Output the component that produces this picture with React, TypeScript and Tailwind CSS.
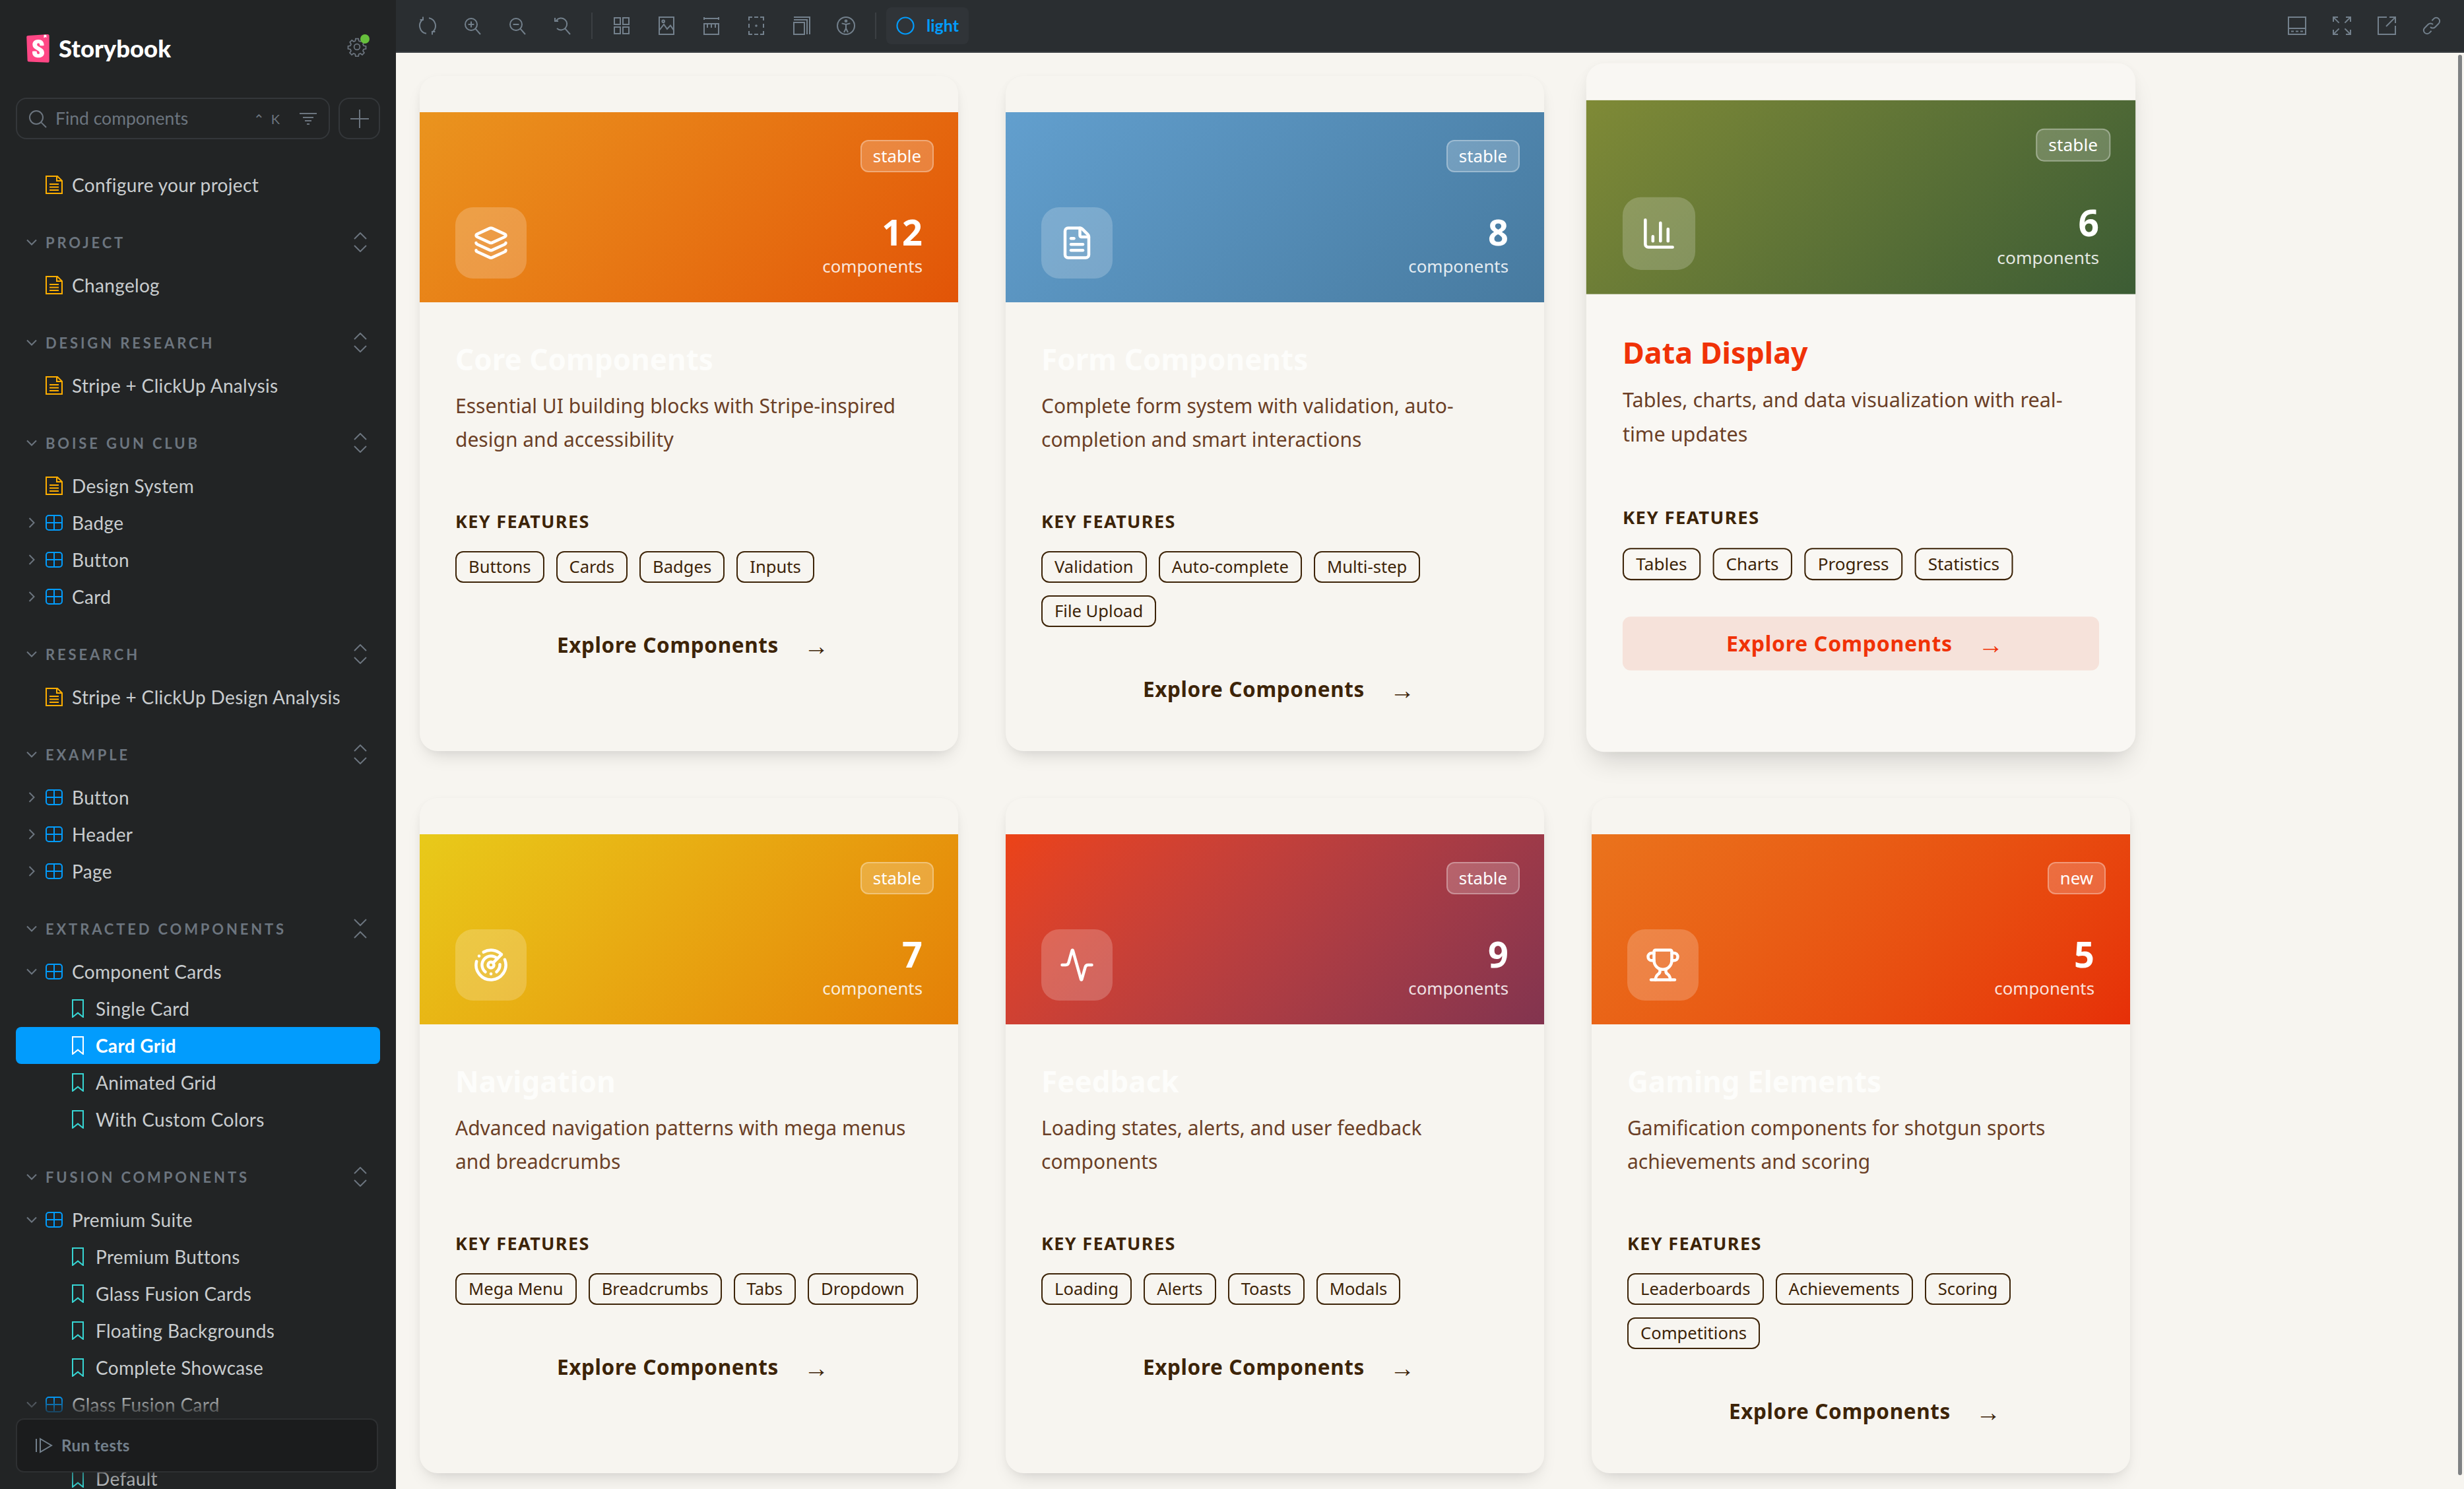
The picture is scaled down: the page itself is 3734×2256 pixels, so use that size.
import type { ReactNode } from 'react';
import { Layers, FileText, ChartColumn, Radar, Activity, Trophy } from 'lucide-react';

const sbFont = "font-['Lato','Noto_Sans',sans-serif]";

function Ico({ children, size = 28, className = '' }: { children: ReactNode; size?: number; className?: string }) {
  return (
    <svg width={size} height={size} viewBox="0 0 14 14" fill="none" stroke="currentColor" strokeWidth="1" className={className}>
      {children}
    </svg>
  );
}

const toolIcons: ReactNode[] = [
  <><path d="M6 12.900A6 6 0 0 1 3.300 2.300" /><path d="M8 1.100A6 6 0 0 1 10.700 11.700" /><path d="M3.500.3v2.200H1.300M10.500 13.700v-2.200h2.200" /></>,
  <><circle cx="6" cy="6" r="4.500" /><path d="M9.300 9.300L13 13.500M6 3.800v4.400M3.800 6h4.400" /></>,
  <><circle cx="6" cy="6" r="4.500" /><path d="M9.300 9.300L13 13.500M3.800 6h4.400" /></>,
  <><path d="M2.500 3a4.500 4.500 0 1 1 .5 6" /><path d="M9.300 9.300L13 13.500M1.500 1v2.500H4" /></>,
  <><path d="M1.500 1h4.500v5H1.500zM8 1h4.500v5H8zM1.500 8h4.500v5H1.500zM8 8h4.500v5H8z" /></>,
  <><path d="M1.500.5h11v13h-11z" /><circle cx="4.600" cy="3.600" r=".9" /><path d="M1.500 10.500L5 6l2.500 3.500L10 6.800l2.500 3.500" /></>,
  <><path d="M1.500.5v2M12.500.5v2M1.500 1.500h11M1.500 5.500h11v8h-11zM4 5.500v3M7 5.500v3M10 5.500v3" /></>,
  <><path d="M1.500 3V.5H4M10 .5h2.500V3M12.500 5.500v3M12.500 11v2.500H10M4 13.500H1.500V11M1.500 8.500v-3M5.500.5h3M5.500 13.500h3" /><circle cx="7" cy="7" r=".4" /></>,
  <><path d="M1.500 4.500h8v9h-8zM1.500 2.500h10v11M1.500.5h12v13" /></>,
  <><circle cx="7" cy="7" r="6.500" /><circle cx="7" cy="3.400" r=".7" /><path d="M3.800 5.200L7 6l3.200-.8M7 6v3M7 9l-1.500 3M7 9l1.500 3" /></>,
];

const rightIcons: ReactNode[] = [
  <><path d="M.5.5h13v13H.5zM.5 9h13M2.500 11.300h2M6 11.300h2M9.500 11.300h2" /></>,
  <><path d="M.8.8l4 4M13.200.8l-4 4M.8 13.200l4-4M13.200 13.200l-4-4M.5 4V.5H4M10 .5h3.500V4M.5 10v3.500H4M10 13.500h3.500V10" /></>,
  <><path d="M7 .5H.5v13h13V7M6.500 7.500L13.200.8M9 .5h4.500V5" /></>,
  <><path d="M6 8a2.600 2.600 0 0 0 3.700 0l2.600-2.600a2.600 2.600 0 0 0-3.700-3.700L7.200 3.100" /><path d="M8 6a2.600 2.600 0 0 0-3.700 0L1.700 8.600a2.600 2.600 0 0 0 3.700 3.700l1.400-1.400" /></>,
];

function Toolbar() {
  return (
    <div className="h-20 shrink-0 bg-[#2a2e31] border-b-2 border-[#3b3f43] flex items-center pl-[14px] pr-[15px] text-[#73808c]">
      {toolIcons.slice(0, 4).map((icon, i) => (
        <div key={i} className="w-[68px] h-12 flex items-center justify-center">
          <Ico>{icon}</Ico>
        </div>
      ))}
      <div className="w-[2px] h-10 bg-[#3b3f43] mx-[10px]" />
      {toolIcons.slice(4).map((icon, i) => (
        <div key={i} className="w-[68px] h-12 flex items-center justify-center">
          <Ico>{icon}</Ico>
        </div>
      ))}
      <div className="w-[2px] h-10 bg-[#3b3f43] mx-[10px]" />
      <div className="w-[125px] h-14 ml-[5px] rounded-lg bg-[#303438] flex items-center pl-[15px] gap-[18px] text-[#029cfd]">
        <svg width="28" height="28" viewBox="0 0 28 28" fill="none" stroke="currentColor" strokeWidth="2.200"><circle cx="14" cy="14" r="12.500" /></svg>
        <span className={`${sbFont} text-[25px] font-bold`}>light</span>
      </div>
      <div className="ml-auto flex">
        {rightIcons.map((icon, i) => (
          <div key={i} className="w-[68px] h-12 flex items-center justify-center">
            <Ico>{icon}</Ico>
          </div>
        ))}
      </div>
    </div>
  );
}

type NavItem = { label: string; kind: 'doc' | 'comp' | 'compClosed' | 'story'; selected?: boolean; pushed?: boolean };
type NavGroup = { title?: string; collapse?: boolean; items: NavItem[] };

const nav: NavGroup[] = [
  { items: [{ label: 'Configure your project', kind: 'doc' }] },
  { title: 'PROJECT', items: [{ label: 'Changelog', kind: 'doc' }] },
  { title: 'DESIGN RESEARCH', items: [{ label: 'Stripe + ClickUp Analysis', kind: 'doc' }] },
  {
    title: 'BOISE GUN CLUB',
    items: [
      { label: 'Design System', kind: 'doc' },
      { label: 'Badge', kind: 'compClosed' },
      { label: 'Button', kind: 'compClosed' },
      { label: 'Card', kind: 'compClosed' },
    ],
  },
  { title: 'RESEARCH', items: [{ label: 'Stripe + ClickUp Design Analysis', kind: 'doc' }] },
  {
    title: 'EXAMPLE',
    items: [
      { label: 'Button', kind: 'compClosed' },
      { label: 'Header', kind: 'compClosed' },
      { label: 'Page', kind: 'compClosed' },
    ],
  },
  {
    title: 'EXTRACTED COMPONENTS',
    collapse: true,
    items: [
      { label: 'Component Cards', kind: 'comp' },
      { label: 'Single Card', kind: 'story' },
      { label: 'Card Grid', kind: 'story', selected: true },
      { label: 'Animated Grid', kind: 'story' },
      { label: 'With Custom Colors', kind: 'story' },
    ],
  },
  {
    title: 'FUSION COMPONENTS',
    items: [
      { label: 'Premium Suite', kind: 'comp' },
      { label: 'Premium Buttons', kind: 'story' },
      { label: 'Glass Fusion Cards', kind: 'story' },
      { label: 'Floating Backgrounds', kind: 'story' },
      { label: 'Complete Showcase', kind: 'story' },
      { label: 'Glass Fusion Card', kind: 'comp' },
      { label: 'Default', kind: 'story', pushed: true },
    ],
  },
];

function Chevron({ closed }: { closed?: boolean }) {
  return (
    <svg width="16" height="10" viewBox="0 0 16 10" fill="none" stroke="#6c757f" strokeWidth="2" className={closed ? '-rotate-90' : ''}>
      <path d="M1 1.500l7 7 7-7" />
    </svg>
  );
}

function Row({ item }: { item: NavItem }) {
  const isStory = item.kind === 'story';
  return (
    <div className={`h-14 mx-6 rounded-lg flex items-center text-[28px] tracking-[0.012em] ${item.pushed ? 'mt-14' : ''} ${item.selected ? 'bg-[#029cfd] text-white font-bold' : 'text-[#c9cdcf]'}`}>
      <div className="w-[46px] pl-4 flex items-center">
        {(item.kind === 'comp' || item.kind === 'compClosed') && <Chevron closed={item.kind === 'compClosed'} />}
      </div>
      {isStory ? (
        <div className={`ml-[34px] w-[41px] ${item.selected ? 'text-white' : 'text-[#37d5d3]'}`}>
          <Ico><path d="M3 .5h8v13L7 10.300 3 13.500z" /></Ico>
        </div>
      ) : item.kind === 'doc' ? (
        <div className="-ml-[2px] w-[41px] text-[#ffae00]">
          <Ico><path d="M1 .5h8.500L13 4v9.500H1zM9 .5V4h4M3.500 6.500h7M3.500 8.800h7M3.500 11h7" /></Ico>
        </div>
      ) : (
        <div className="-ml-[2px] w-[41px] text-[#029cfd]">
          <Ico><rect x="1" y="1.500" width="12" height="11" rx="2" /><path d="M7 1.500v11M1 7h12" /></Ico>
        </div>
      )}
      <span className="whitespace-nowrap">{item.label}</span>
    </div>
  );
}

function Sidebar() {
  return (
    <aside className={`${sbFont} relative w-[600px] shrink-0 h-full bg-[#222425] overflow-hidden`}>
      <div className="h-[148px] pl-10 pr-[44px] pt-[52px] flex items-start justify-between">
        <div className="flex items-center gap-[14px]">
          <svg width="35" height="43" viewBox="0 0 16.100 20.100">
            <path d="M.62 18.430L0 1.920C-.02 1.370.4.910.95.880L14.990 0c.56-.03 1.030.4 1.070.950v18.100c0 .55-.46 1-1.010.98L1.570 19.390c-.52-.02-.93-.44-.95-.96z" fill="#FF4785" />
            <path d="M12.200 2.500l.1-2.100 1.700-.1.1 2.200-.8-.6-.7.5z" fill="#fff" />
            <path d="M9.370 7.860c0 .39 2.620.2 2.970-.07 0-2.660-1.430-4.060-4.040-4.060-2.620 0-4.080 1.420-4.080 3.550 0 3.710 5 3.780 5 5.800 0 .57-.28.91-.9.91-.8 0-1.120-.41-1.080-1.800 0-.3-3.050-.4-3.150 0-.23 3.370 1.860 4.340 4.260 4.340 2.320 0 4.140-1.240 4.140-3.480 0-3.990-5.080-3.880-5.080-5.850 0-.8.6-.91.95-.91.37 0 1.040.07 1 1.570z" fill="#fff" />
          </svg>
          <span className="text-white text-[36.500px] font-black leading-none">Storybook</span>
        </div>
        <div className="relative mt-1 text-[#6c757f]">
          <svg width="30" height="30" viewBox="0 0 24 24" fill="none" stroke="currentColor" strokeWidth="1.400">
            <circle cx="12" cy="12" r="3.500" />
            <path d="M10.300 2h3.400l.5 2.800 1.900.8 2.300-1.600 2.400 2.400-1.600 2.300.8 1.900 2.800.5v3.400l-2.800.5-.8 1.900 1.600 2.300-2.400 2.400-2.300-1.600-1.900.8-.5 2.800h-3.400l-.5-2.800-1.900-.8-2.300 1.600-2.400-2.400 1.600-2.300-.8-1.900-2.800-.5v-3.400l2.800-.5.8-1.900L3.400 6.400l2.400-2.400 2.300 1.600 1.900-.8z" />
          </svg>
          <div className="absolute -top-[4px] -right-[4px] w-[14px] h-[14px] rounded-full bg-[#66bf3c]" />
        </div>
      </div>

      <div className="mx-6 flex gap-[13px]">
        <div className="h-[63px] flex-1 rounded-2xl border-2 border-[#34373a] flex items-center pl-[17px] pr-[18px] text-[#6c757f]">
          <svg width="28" height="28" viewBox="0 0 14 14" fill="none" stroke="currentColor" strokeWidth="1"><circle cx="6" cy="6" r="5" /><path d="M9.800 9.800L13.500 13.500" /></svg>
          <span className="ml-[13px] text-[26.500px]">Find components</span>
          <span className="ml-auto text-[20px] mr-[30px]">⌃&nbsp;&nbsp;K</span>
          <svg width="26" height="20" viewBox="0 0 26 20" fill="none" stroke="currentColor" strokeWidth="2"><path d="M0 2h26M5 8h16M8 13h10M11 18h4" /></svg>
        </div>
        <div className="h-[63px] w-[63px] rounded-2xl border-2 border-[#34373a] flex items-center justify-center text-[#6c757f]">
          <svg width="28" height="28" viewBox="0 0 28 28" fill="none" stroke="currentColor" strokeWidth="2"><path d="M14 0v28M0 14h28" /></svg>
        </div>
      </div>

      <div className="pt-[41px]">
        {nav.map((group, i) => (
          <div key={i}>
            {group.title && (
              <div className="mt-[39px] mb-[17px] h-10 pl-10 pr-[44px] flex items-center text-[22px] font-bold tracking-[0.175em] text-[#6c757f]">
                <Chevron />
                <span className="ml-[13px]">{group.title}</span>
                <svg width="20" height="30" viewBox="0 0 20 30" fill="none" stroke="currentColor" strokeWidth="2" className="ml-auto mr-0">
                  {group.collapse ? <path d="M1 1l9 9 9-9M1 29l9-9 9 9" /> : <path d="M1 10l9-9 9 9M1 20l9 9 9-9" />}
                </svg>
              </div>
            )}
            {group.items.map((item, j) => (
              <Row key={j} item={item} />
            ))}
          </div>
        ))}
      </div>

      <div className="absolute left-0 right-0 bottom-0 h-[141px] bg-[linear-gradient(to_bottom,transparent_0%,#222425_24%,#222425_60%,transparent_100%)] pointer-events-none" />
      <div className="absolute left-6 right-[27px] bottom-[25px] h-[82px] rounded-xl bg-[#1b1c1d] border-2 border-[#2e3032] flex items-center pl-[28px] gap-[13px] text-[#73808c]">
        <svg width="26" height="24" viewBox="0 0 26 24" fill="none" stroke="currentColor" strokeWidth="2"><path d="M1 2v20M7 2l17 10L7 22z" /></svg>
        <span className="text-[24px] font-bold tracking-[0.02em]">Run tests</span>
      </div>
    </aside>
  );
}

type Card = {
  title: string;
  desc: string;
  count: number;
  badge: string;
  from: string;
  to: string;
  tags: string[];
  icon: ReactNode;
  hover?: boolean;
};

const iconProps = { size: 54, strokeWidth: 2, className: 'text-white' };

const cards: Card[] = [
  { title: 'Core Components', desc: 'Essential UI building blocks with Stripe-inspired design and accessibility', count: 12, badge: 'stable', from: 'from-[#ea941e]', to: 'to-[#e25407]', tags: ['Buttons', 'Cards', 'Badges', 'Inputs'], icon: <Layers {...iconProps} /> },
  { title: 'Form Components', desc: 'Complete form system with validation, auto-completion and smart interactions', count: 8, badge: 'stable', from: 'from-[#629fce]', to: 'to-[#477a9f]', tags: ['Validation', 'Auto-complete', 'Multi-step', 'File Upload'], icon: <FileText {...iconProps} /> },
  { title: 'Data Display', desc: 'Tables, charts, and data visualization with real-time updates', count: 6, badge: 'stable', from: 'from-[#7f8a36]', to: 'to-[#3c5c34]', tags: ['Tables', 'Charts', 'Progress', 'Statistics'], icon: <ChartColumn {...iconProps} />, hover: true },
  { title: 'Navigation', desc: 'Advanced navigation patterns with mega menus and breadcrumbs', count: 7, badge: 'stable', from: 'from-[#e8ca1a]', to: 'to-[#e47f07]', tags: ['Mega Menu', 'Breadcrumbs', 'Tabs', 'Dropdown'], icon: <Radar {...iconProps} /> },
  { title: 'Feedback', desc: 'Loading states, alerts, and user feedback components', count: 9, badge: 'stable', from: 'from-[#ec4316]', to: 'to-[#82344f]', tags: ['Loading', 'Alerts', 'Toasts', 'Modals'], icon: <Activity {...iconProps} /> },
  { title: 'Gaming Elements', desc: 'Gamification components for shotgun sports achievements and scoring', count: 5, badge: 'new', from: 'from-[#ea731c]', to: 'to-[#e62f08]', tags: ['Leaderboards', 'Achievements', 'Scoring', 'Competitions'], icon: <Trophy {...iconProps} /> },
];

function FeatureCard({ card }: { card: Card }) {
  return (
    <div className={`rounded-[27px] pt-[55px] ${card.hover ? 'bg-[#f9f7f3] scale-[1.02] -translate-y-[9px] shadow-[0_2px_14px_rgba(0,0,0,0.03),0_22px_40px_-12px_rgba(0,0,0,0.16)]' : 'bg-[#f7f5f0] shadow-[0_2px_12px_rgba(0,0,0,0.03),0_14px_28px_-10px_rgba(0,0,0,0.15)]'}`}>
      <div className={`relative h-[288px] px-[54px] pb-[36px] flex items-end justify-between bg-linear-135 ${card.from} ${card.to}`}>
        <div className="absolute top-[42px] right-[37px] h-[49px] px-[17px] rounded-xl bg-white/20 border-2 border-white/30 text-white text-[25.800px] flex items-center">
          {card.badge}
        </div>
        <div className="w-[108px] h-[108px] rounded-[27px] bg-white/20 flex items-center justify-center">
          {card.icon}
        </div>
        <div className="text-right text-white">
          <div className="text-[54px] font-bold leading-[66px]">{card.count}</div>
          <div className="text-[25.800px] leading-[38px] opacity-85">components</div>
        </div>
      </div>
      <div className="p-[54px]">
        <h3 className={`text-[44px] font-bold leading-[64px] mb-[13px] ${card.hover ? 'text-[#f03207]' : 'text-[#fdfdfb]'}`}>{card.title}</h3>
        <p className="text-[30px] leading-[51px] text-[#6b3f26] mb-[80px] min-h-[102px]">{card.desc}</p>
        <div className="text-[27px] font-bold tracking-[0.05em] leading-[38px] text-[#3d2408] mb-[26px]">KEY FEATURES</div>
        <div className="flex flex-wrap gap-x-[18px] gap-y-[19px] mb-[54px]">
          {card.tags.map((t) => (
            <span key={t} className="h-12 px-[18px] rounded-xl border-2 border-[#3d2408] text-[#3d2408] text-[25.600px] flex items-center">{t}</span>
          ))}
        </div>
        <div className={`h-20 pl-3 rounded-xl flex items-center justify-center gap-[38px] text-[31.500px] font-bold ${card.hover ? 'bg-[#f6e2da] text-[#f03207]' : 'text-[#3d2408]'}`}>
          <span className="tracking-[0.02em]">Explore Components</span>
          <span className="text-[38px] leading-none">→</span>
        </div>
      </div>
    </div>
  );
}

export default function App() {
  return (
    <div className="h-[2256px] w-[3734px] flex overflow-hidden font-['Noto_Sans',sans-serif]">
      <Sidebar />
      <main className="flex-1 min-w-0 flex flex-col relative bg-[#f7f5f0]">
        <Toolbar />
        <div className="flex-1 overflow-hidden pl-9 pt-[35px]">
          <div className="grid grid-cols-[repeat(3,816px)] gap-x-[72px] gap-y-[71px]">
            {cards.map((c) => (
              <FeatureCard key={c.title} card={c} />
            ))}
          </div>
        </div>
        <div className="absolute right-[3px] top-[83px] w-[6px] h-[2152px] rounded-full bg-[#7f8284]" />
      </main>
    </div>
  );
}
